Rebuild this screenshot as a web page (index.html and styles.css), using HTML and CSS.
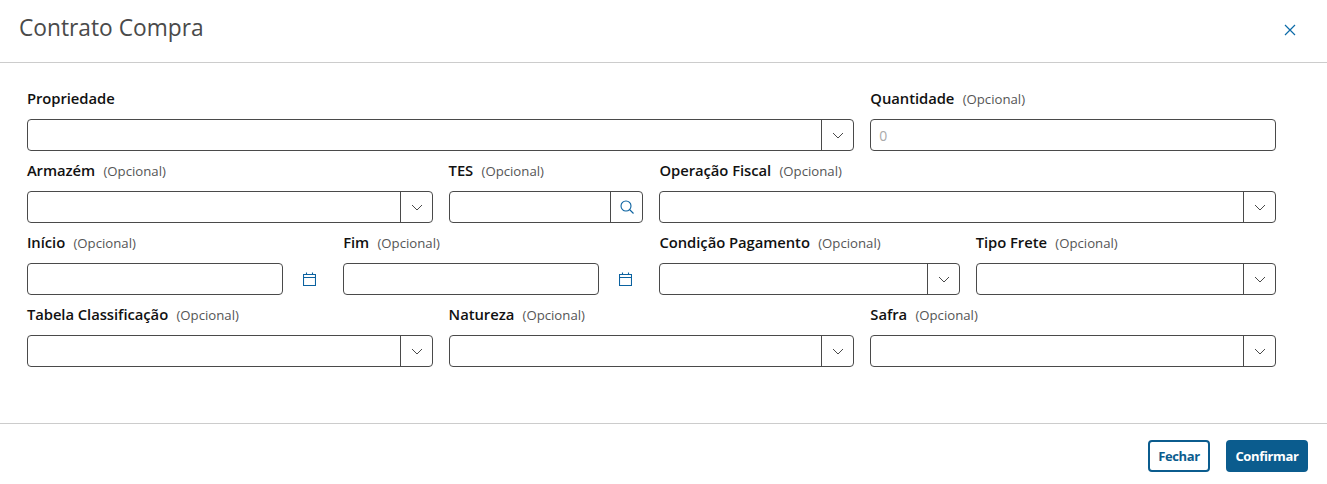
FILE: index.html
```html
<!DOCTYPE html>
<html lang="pt-BR">
<head>
    <meta charset="UTF-8">
    <meta name="viewport" content="width=device-width, initial-scale=1.0">
    <title>Contrato Compra</title>
    <link rel="stylesheet" href="styles.css">
</head>
<body>

<div class="modal">
    <div class="modal-header">
        <h1 class="modal-title">Contrato Compra</h1>
        <button class="close-button" aria-label="Fechar">
            <svg width="12" height="12" viewBox="0 0 12 12"><path d="M1 1L11 11M11 1L1 11" /></svg>
        </button>
    </div>

    <form class="modal-body">
        <div class="field span-8">
            <label class="field-label">Propriedade</label>
            <div class="control">
                <input type="text" class="control-input">
                <span class="control-addon"><svg class="chevron" width="12" height="7" viewBox="0 0 12 7"><path d="M1 1L6 6L11 1" /></svg></span>
            </div>
        </div>
        <div class="field span-4">
            <label class="field-label">Quantidade <small>(Opcional)</small></label>
            <div class="control">
                <input type="text" class="control-input" placeholder="0">
            </div>
        </div>

        <div class="field span-4">
            <label class="field-label">Armazém <small>(Opcional)</small></label>
            <div class="control">
                <input type="text" class="control-input">
                <span class="control-addon"><svg class="chevron" width="12" height="7" viewBox="0 0 12 7"><path d="M1 1L6 6L11 1" /></svg></span>
            </div>
        </div>
        <div class="field span-2">
            <label class="field-label">TES <small>(Opcional)</small></label>
            <div class="control">
                <input type="text" class="control-input">
                <span class="control-addon"><svg class="icon-blue" width="14" height="14" viewBox="0 0 14 14"><circle cx="6" cy="6" r="5" /><path d="M9.5 9.5L13.5 13.5" /></svg></span>
            </div>
        </div>
        <div class="field span-6">
            <label class="field-label">Operação Fiscal <small>(Opcional)</small></label>
            <div class="control">
                <input type="text" class="control-input">
                <span class="control-addon"><svg class="chevron" width="12" height="7" viewBox="0 0 12 7"><path d="M1 1L6 6L11 1" /></svg></span>
            </div>
        </div>

        <div class="field span-3">
            <label class="field-label">Início <small>(Opcional)</small></label>
            <div class="date-row">
                <div class="control"><input type="text" class="control-input"></div>
                <span class="date-icon"><svg class="icon-blue" width="13" height="14" viewBox="0 0 13 14"><path d="M.5 2.5H12.5V13.5H.5ZM.5 5.5H12.5M3.5 .5V3M9.5 .5V3" /></svg></span>
            </div>
        </div>
        <div class="field span-3">
            <label class="field-label">Fim <small>(Opcional)</small></label>
            <div class="date-row">
                <div class="control"><input type="text" class="control-input"></div>
                <span class="date-icon"><svg class="icon-blue" width="13" height="14" viewBox="0 0 13 14"><path d="M.5 2.5H12.5V13.5H.5ZM.5 5.5H12.5M3.5 .5V3M9.5 .5V3" /></svg></span>
            </div>
        </div>
        <div class="field span-3">
            <label class="field-label">Condição Pagamento <small>(Opcional)</small></label>
            <div class="control">
                <input type="text" class="control-input">
                <span class="control-addon"><svg class="chevron" width="12" height="7" viewBox="0 0 12 7"><path d="M1 1L6 6L11 1" /></svg></span>
            </div>
        </div>
        <div class="field span-3">
            <label class="field-label">Tipo Frete <small>(Opcional)</small></label>
            <div class="control">
                <input type="text" class="control-input">
                <span class="control-addon"><svg class="chevron" width="12" height="7" viewBox="0 0 12 7"><path d="M1 1L6 6L11 1" /></svg></span>
            </div>
        </div>

        <div class="field span-4">
            <label class="field-label">Tabela Classificação <small>(Opcional)</small></label>
            <div class="control">
                <input type="text" class="control-input">
                <span class="control-addon"><svg class="chevron" width="12" height="7" viewBox="0 0 12 7"><path d="M1 1L6 6L11 1" /></svg></span>
            </div>
        </div>
        <div class="field span-4">
            <label class="field-label">Natureza <small>(Opcional)</small></label>
            <div class="control">
                <input type="text" class="control-input">
                <span class="control-addon"><svg class="chevron" width="12" height="7" viewBox="0 0 12 7"><path d="M1 1L6 6L11 1" /></svg></span>
            </div>
        </div>
        <div class="field span-4">
            <label class="field-label">Safra <small>(Opcional)</small></label>
            <div class="control">
                <input type="text" class="control-input">
                <span class="control-addon"><svg class="chevron" width="12" height="7" viewBox="0 0 12 7"><path d="M1 1L6 6L11 1" /></svg></span>
            </div>
        </div>
    </form>

    <div class="modal-footer">
        <button class="button button-outline">Fechar</button>
        <button class="button button-primary">Confirmar</button>
    </div>
</div>

</body>
</html>
```

FILE: styles.css
```css
body {
    font-family: "Open Sans", "Noto Sans", sans-serif;
    background-color: #fff;
    color: #111;
    margin: 0;
}
.modal {
    height: 484px;
    overflow: hidden;
}
.modal-header {
    height: 62px;
    display: flex;
    justify-content: space-between;
    align-items: center;
    padding: 0 31px 0 19px;
    border-bottom: 1px solid #ccc;
}
.modal-title {
    margin: 0 0 8px;
    font-size: 22.75px;
    font-weight: 400;
    color: #4a4a4a;
}
.close-button {
    display: flex;
    margin-bottom: 2px;
    padding: 0;
    background: none;
    border: none;
    cursor: pointer;
}
.close-button svg path {
    fill: none;
    stroke: #0b6aa8;
    stroke-width: 1.2;
}
.modal-body {
    height: 361px;
    box-sizing: border-box;
    display: grid;
    grid-template-columns: repeat(12, 1fr);
    grid-auto-rows: 72px;
    column-gap: 16px;
    padding: 20px 51px 0 26.9px;
    border-bottom: 1px solid #ccc;
}
.span-2 { grid-column: span 2; }
.span-3 { grid-column: span 3; }
.span-4 { grid-column: span 4; }
.span-6 { grid-column: span 6; }
.span-8 { grid-column: span 8; }
.field-label {
    display: block;
    height: 36px;
    line-height: 30px;
    font-size: 14.8px;
    font-weight: 600;
    letter-spacing: -0.05px;
    white-space: nowrap;
}
.field-label small {
    margin-left: 4.5px;
    font-size: 13.2px;
    font-weight: 400;
    letter-spacing: 0;
    color: #555;
}
.control {
    flex: 1;
    display: flex;
    height: 32px;
    box-sizing: border-box;
    border: 1px solid #4a4a4a;
    border-radius: 4px;
    background-color: #fff;
}
.control-input {
    flex: 1;
    min-width: 0;
    padding: 0 8px;
    border: none;
    border-radius: 4px;
    background: none;
    font-family: inherit;
    font-size: 14px;
}
.control-input::placeholder {
    color: #aaa;
}
.control-addon {
    width: 32px;
    box-sizing: border-box;
    flex-shrink: 0;
    display: flex;
    justify-content: center;
    align-items: center;
    padding-left: 1px;
    border-left: 1px solid #4a4a4a;
}
.chevron path {
    fill: none;
    stroke: #4a4a4a;
    stroke-width: 1;
}
.icon-blue circle,
.icon-blue path {
    fill: none;
    stroke: #0b62a0;
    stroke-width: 1.1;
}
.date-row {
    display: flex;
    align-items: center;
}
.date-icon {
    width: 44px;
    flex-shrink: 0;
    display: flex;
    justify-content: center;
    padding-left: 9px;
    box-sizing: border-box;
}
.modal-footer {
    display: flex;
    justify-content: flex-end;
    gap: 16px;
    padding: 16px 19px 0 0;
}
.button {
    height: 32px;
    box-sizing: border-box;
    padding: 0;
    border: 2px solid #0b5c8e;
    border-radius: 4px;
    font-family: inherit;
    font-size: 13px;
    font-weight: 700;
    letter-spacing: -0.35px;
    cursor: pointer;
}
.button-outline {
    width: 62px;
    background-color: #fff;
    color: #0b5c8e;
}
.button-primary {
    width: 82px;
    background-color: #0b5c8e;
    color: #fff;
}
```
